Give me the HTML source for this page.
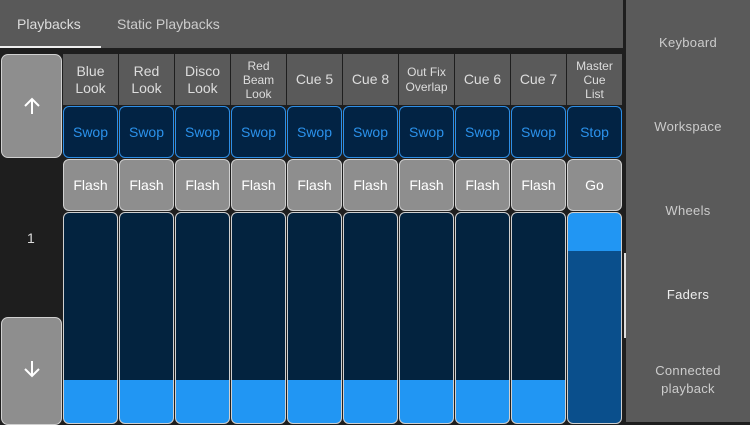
<!DOCTYPE html><html><head><style>
*{margin:0;padding:0;box-sizing:border-box}
body{width:750px;height:422px;background:#1e1e1e;position:relative;overflow:hidden;font-family:"Liberation Sans",sans-serif}
.a{position:absolute}
.top{left:0;top:0;width:623px;height:48px;background:#595959}
.tab{top:16px;font-size:14px;color:#ddd}
.side{left:626px;top:0;width:124px;height:422px;background:#5a5a5a}
.si{left:626px;width:124px;text-align:center;font-size:13px;color:#ccc;letter-spacing:.3px}
.hd{top:54px;height:51px;width:55px;background:#5a5a5a;color:#ddd;text-align:center;display:flex;align-items:center;justify-content:center;font-size:14px;line-height:17px}
.sw{top:106px;height:52px;width:55px;background:#022344;border:1.5px solid #2d8ee6;border-radius:6px;color:#2b92ec;font-size:14px;display:flex;align-items:center;justify-content:center}
.fl{top:159px;height:52px;width:55px;background:#8e8e8e;border:1.5px solid #d0d0d0;border-radius:6px;color:#fff;font-size:14px;display:flex;align-items:center;justify-content:center}
.fd{top:212px;height:212px;width:55px;background:linear-gradient(#03233f 0,#03233f 167px,#2196f3 167px);border:1.5px solid #d0d0d0;border-radius:6px}
.btn{left:1px;width:61px;background:#8e8e8e;border:1.5px solid #d0d0d0;border-radius:7px}
</style></head><body>
<div class="a top"></div>
<div class="a tab" style="left:17px">Playbacks</div>
<div class="a tab" style="left:117px;color:#ccc">Static Playbacks</div>
<div class="a" style="left:0;top:46px;width:101px;height:2px;background:#eee"></div>
<div class="a side"></div>
<div class="a" style="left:624px;top:253px;width:2px;height:85px;background:#ddd"></div>
<div class="a si" style="top:35px">Keyboard</div>
<div class="a si" style="top:119px">Workspace</div>
<div class="a si" style="top:203px">Wheels</div>
<div class="a si" style="top:287px;color:#eee">Faders</div>
<div class="a si" style="top:362px;line-height:18px">Connected<br>playback</div>
<div class="a btn" style="top:54px;height:104px"><svg class="a" style="left:21px;top:42px" width="18" height="18"><path d="M9 2V17M2 9L9 2L16 9" stroke="#fff" stroke-width="2" fill="none"/></svg></div>
<div class="a btn" style="top:317px;height:108px"><svg class="a" style="left:21px;top:42px" width="18" height="18"><path d="M9 1V16M2 9L9 16L16 9" stroke="#fff" stroke-width="2" fill="none"/></svg></div>
<div class="a" style="left:27px;top:230px;color:#ddd;font-size:14px">1</div>

<div class="a hd" style="left:63px">Blue<br>Look</div>
<div class="a hd" style="left:119px">Red<br>Look</div>
<div class="a hd" style="left:175px">Disco<br>Look</div>
<div class="a hd" style="left:231px;font-size:12px;line-height:14px">Red<br>Beam<br>Look</div>
<div class="a hd" style="left:287px">Cue 5</div>
<div class="a hd" style="left:343px">Cue 8</div>
<div class="a hd" style="left:399px;font-size:12px;line-height:15px">Out Fix<br>Overlap</div>
<div class="a hd" style="left:455px">Cue 6</div>
<div class="a hd" style="left:511px">Cue 7</div>
<div class="a hd" style="left:567px;font-size:12px;line-height:14px">Master<br>Cue<br>List</div>

<div class="a sw" style="left:63px">Swop</div><div class="a sw" style="left:119px">Swop</div><div class="a sw" style="left:175px">Swop</div><div class="a sw" style="left:231px">Swop</div><div class="a sw" style="left:287px">Swop</div><div class="a sw" style="left:343px">Swop</div><div class="a sw" style="left:399px">Swop</div><div class="a sw" style="left:455px">Swop</div><div class="a sw" style="left:511px">Swop</div><div class="a sw" style="left:567px">Stop</div>

<div class="a fl" style="left:63px">Flash</div><div class="a fl" style="left:119px">Flash</div><div class="a fl" style="left:175px">Flash</div><div class="a fl" style="left:231px">Flash</div><div class="a fl" style="left:287px">Flash</div><div class="a fl" style="left:343px">Flash</div><div class="a fl" style="left:399px">Flash</div><div class="a fl" style="left:455px">Flash</div><div class="a fl" style="left:511px">Flash</div><div class="a fl" style="left:567px">Go</div>

<div class="a fd" style="left:63px"></div><div class="a fd" style="left:119px"></div><div class="a fd" style="left:175px"></div><div class="a fd" style="left:231px"></div><div class="a fd" style="left:287px"></div><div class="a fd" style="left:343px"></div><div class="a fd" style="left:399px"></div><div class="a fd" style="left:455px"></div><div class="a fd" style="left:511px"></div>
<div class="a fd" style="left:567px;background:linear-gradient(#2196f3 0,#2196f3 38px,#0a4f8c 38px)"></div>
</body></html>
